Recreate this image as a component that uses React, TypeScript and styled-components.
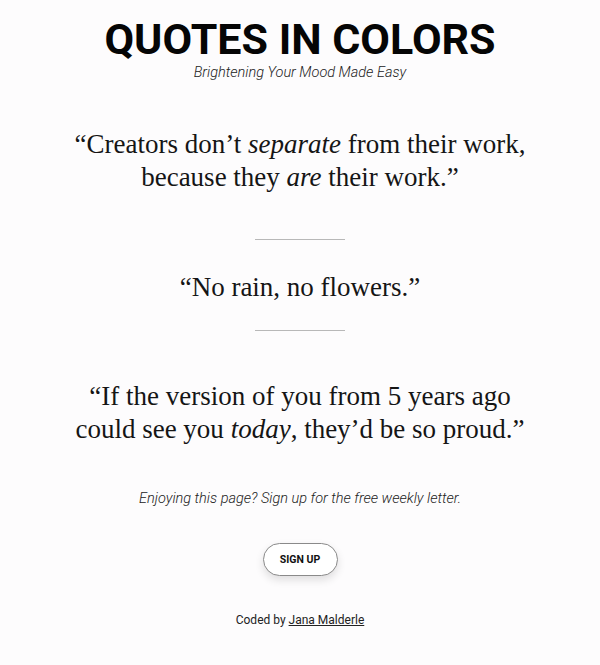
import React from "react";
import styled, { createGlobalStyle } from "styled-components";

const GlobalStyle = createGlobalStyle`
  html, body {
    margin: 0;
    padding: 0;
    background: #fdfcfd;
  }
`;

const Page = styled.main({
  display: "flex",
  flexDirection: "column",
  alignItems: "center",
  fontFamily: "Roboto, 'Liberation Sans', sans-serif",
  color: "#111",
  paddingTop: "14px",
});

const Title = styled.h1({
  margin: 0,
  fontSize: "43px",
  fontWeight: 700,
  lineHeight: "50px",
  color: "#050505",
});

const Subtitle = styled.p({
  margin: 0,
  fontSize: "14.5px",
  lineHeight: "17px",
  fontStyle: "italic",
  fontWeight: 300,
  color: "#222",
});

const QuoteList = styled.section({
  display: "flex",
  flexDirection: "column",
  alignItems: "center",
  marginTop: "47px",
});

const Quote = styled.blockquote({
  margin: 0,
  fontFamily: "'Liberation Serif', 'DejaVu Serif', serif",
  fontSize: "27px",
  lineHeight: "33px",
  textAlign: "center",
  color: "#151515",
  "& em": {
    fontStyle: "italic",
  },
});

const Divider = styled.hr<{ $above: number; $below: number }>(props => ({
  width: "90px",
  height: 0,
  border: "none",
  borderTop: "1px solid #b8b8b8",
  margin: `${props.$above}px 0 ${props.$below}px`,
}));

const Newsletter = styled.p({
  margin: "44px 0 0",
  fontSize: "14.5px",
  lineHeight: "17px",
  fontStyle: "italic",
  fontWeight: 300,
  color: "#222",
});

const SignUpButton = styled.button({
  marginTop: "36px",
  width: "75px",
  height: "33px",
  borderRadius: "17px",
  border: "1px solid #8a8a8a",
  background: "#fff",
  boxShadow: "0 4px 8px rgba(0,0,0,0.12)",
  fontFamily: "Roboto, 'Liberation Sans', sans-serif",
  fontSize: "10.5px",
  fontWeight: 700,
  color: "#111",
  cursor: "pointer",
});

const Credit = styled.footer({
  marginTop: "37px",
  fontSize: "12px",
  lineHeight: "14px",
  color: "#222",
  "& a": {
    color: "#222",
    textDecoration: "underline",
  },
});

const quotes: React.ReactNode[] = [
  <>“Creators don’t <em>separate</em> from their work,<br />because they <em>are</em> their work.”</>,
  <>“No rain, no flowers.”</>,
  <>“If the version of you from 5 years ago<br />could see you <em>today</em>, they’d be so proud.”</>,
];

// spacing above/below each divider, as it sits in the design
const dividerSpace: [number, number][] = [
  [45, 31],
  [26, 49],
];

export default function App() {
  return (
    <Page>
      <GlobalStyle />
      <Title>QUOTES IN COLORS</Title>
      <Subtitle>Brightening Your Mood Made Easy</Subtitle>
      <QuoteList>
        {quotes.map((q, i) => (
          <React.Fragment key={i}>
            {i > 0 && <Divider $above={dividerSpace[i - 1][0]} $below={dividerSpace[i - 1][1]} />}
            <Quote>{q}</Quote>
          </React.Fragment>
        ))}
      </QuoteList>
      <Newsletter>Enjoying this page? Sign up for the free weekly letter.</Newsletter>
      <SignUpButton>SIGN UP</SignUpButton>
      <Credit>
        Coded by <a href="#">Jana Malderle</a>
      </Credit>
    </Page>
  );
}
